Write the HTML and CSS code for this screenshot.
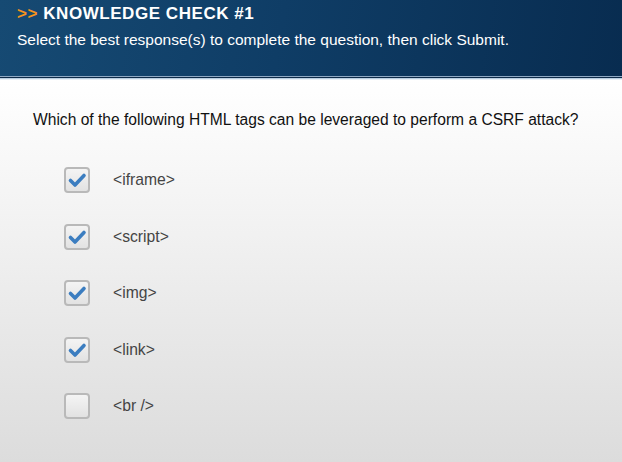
FILE: index.html
```html
<!DOCTYPE html>
<html>
<head>
<meta charset="utf-8">
<link rel="stylesheet" href="styles.css">
</head>
<body>
<div class="header">
  <div class="title"><span class="arrows">&gt;&gt;</span> KNOWLEDGE CHECK #1</div>
  <div class="subtitle">Select the best response(s) to complete the question, then click Submit.</div>
</div>
<div class="rule"></div>
<div class="content">
  <div class="question">Which of the following HTML tags can be leveraged to perform a CSRF attack?</div>
  <div class="options">
    <div class="option"><span class="box checked"><svg viewBox="0 0 22 22" width="22" height="22"><path d="M4.5 11.5 L9 16 L18 6.5" fill="none" stroke="#3b7dc0" stroke-width="3.6" stroke-linecap="round" stroke-linejoin="round"/></svg></span><span class="label">&lt;iframe&gt;</span></div>
    <div class="option"><span class="box checked"><svg viewBox="0 0 22 22" width="22" height="22"><path d="M4.5 11.5 L9 16 L18 6.5" fill="none" stroke="#3b7dc0" stroke-width="3.6" stroke-linecap="round" stroke-linejoin="round"/></svg></span><span class="label">&lt;script&gt;</span></div>
    <div class="option"><span class="box checked"><svg viewBox="0 0 22 22" width="22" height="22"><path d="M4.5 11.5 L9 16 L18 6.5" fill="none" stroke="#3b7dc0" stroke-width="3.6" stroke-linecap="round" stroke-linejoin="round"/></svg></span><span class="label">&lt;img&gt;</span></div>
    <div class="option"><span class="box checked"><svg viewBox="0 0 22 22" width="22" height="22"><path d="M4.5 11.5 L9 16 L18 6.5" fill="none" stroke="#3b7dc0" stroke-width="3.6" stroke-linecap="round" stroke-linejoin="round"/></svg></span><span class="label">&lt;link&gt;</span></div>
    <div class="option"><span class="box"></span><span class="label">&lt;br /&gt;</span></div>
  </div>
</div>
</body>
</html>
```
FILE: styles.css
```css
html, body {
  margin: 0;
  padding: 0;
}
body {
  width: 622px;
  height: 462px;
  overflow: hidden;
  font-family: "Liberation Sans", Arial, sans-serif;
  background: linear-gradient(to bottom, #ffffff 0px, #ffffff 80px, #f6f6f6 180px, #dcdcdc 462px);
}
.header {
  height: 76px;
  box-sizing: border-box;
  padding: 5px 0 0 17px;
  background: linear-gradient(100deg, #164a73 0%, #0f3d66 45%, #082c50 100%);
  color: #fff;
}
.title {
  font-size: 17px;
  font-weight: bold;
  line-height: 18px;
  letter-spacing: 0.55px;
}
.arrows {
  color: #f7941d;
}
.subtitle {
  margin-top: 8px;
  font-size: 15.5px;
  line-height: 18px;
}
.rule {
  height: 4px;
  background: linear-gradient(to bottom, #8fa9c4 0, #8fa9c4 1px, #0d2a48 1px, #0d2a48 2px, #b8cde0 2px, #b8cde0 3px, #e6eef5 3px);
}
.content {
  padding: 31px 0 0 33px;
}
.question {
  font-size: 15.6px;
  line-height: 18px;
  color: #111;
}
.options {
  display: flex;
  flex-direction: column;
  gap: 30.5px;
  margin-top: 38px;
  padding-left: 31px;
}
.option {
  display: flex;
  align-items: center;
  height: 26px;
}
.box {
  width: 26px;
  height: 26px;
  box-sizing: border-box;
  border: 2px solid #b9b9b9;
  border-radius: 4px;
  background: linear-gradient(to bottom, #f4f4f4, #e2e2e2);
  display: flex;
  align-items: center;
  justify-content: center;
}
.label {
  margin-left: 23px;
  font-size: 15.7px;
  color: #444;
}
```
